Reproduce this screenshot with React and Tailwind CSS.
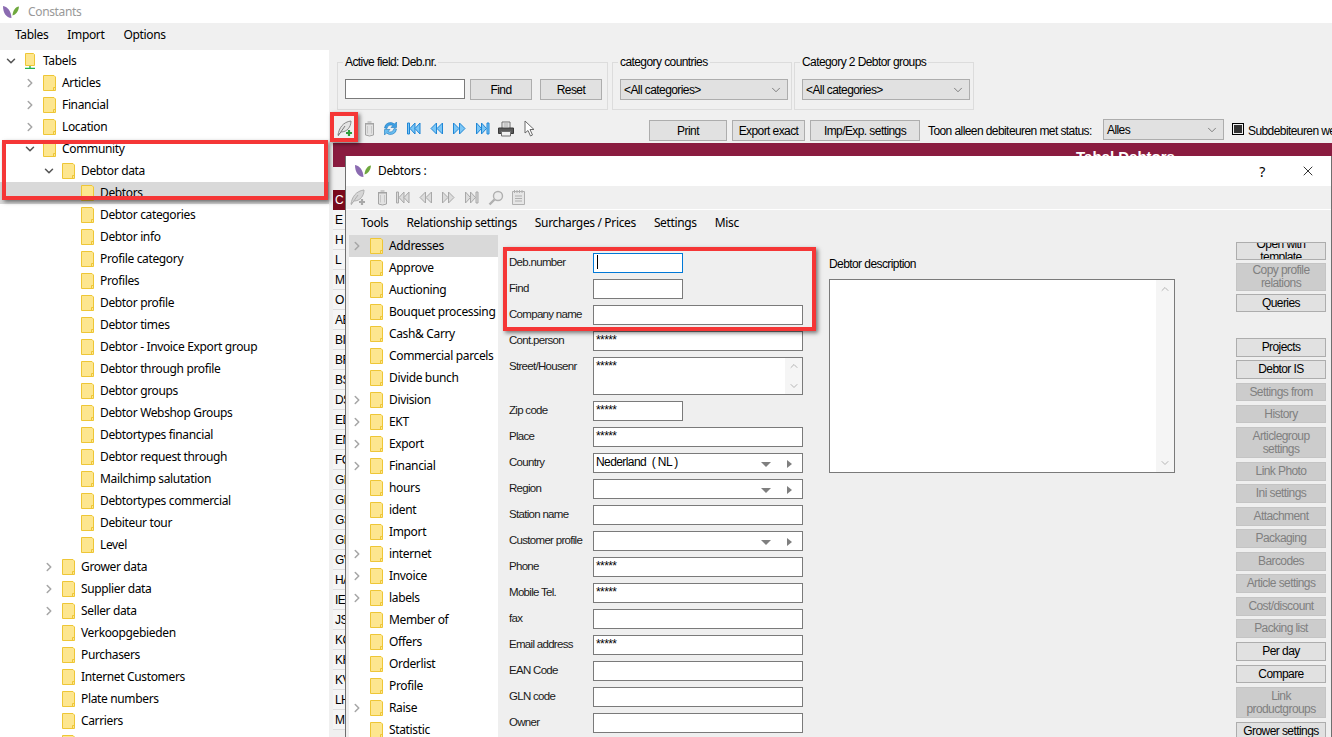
import { ChevronDown, ChevronRight, ChevronUp, X } from "lucide-react";

const treeRows = [
  { t: "Tabels", l: 0, c: "open", root: true },
  { t: "Articles", l: 1, c: "closed" },
  { t: "Financial", l: 1, c: "closed" },
  { t: "Location", l: 1, c: "closed" },
  { t: "Community", l: 1, c: "open" },
  { t: "Debtor data", l: 2, c: "open" },
  { t: "Debtors", l: 3, sel: true },
  { t: "Debtor categories", l: 3 },
  { t: "Debtor info", l: 3 },
  { t: "Profile category", l: 3 },
  { t: "Profiles", l: 3 },
  { t: "Debtor profile", l: 3 },
  { t: "Debtor times", l: 3 },
  { t: "Debtor - Invoice Export group", l: 3 },
  { t: "Debtor through profile", l: 3 },
  { t: "Debtor groups", l: 3 },
  { t: "Debtor Webshop Groups", l: 3 },
  { t: "Debtortypes financial", l: 3 },
  { t: "Debtor request through", l: 3 },
  { t: "Mailchimp salutation", l: 3 },
  { t: "Debtortypes commercial", l: 3 },
  { t: "Debiteur tour", l: 3 },
  { t: "Level", l: 3 },
  { t: "Grower data", l: 2, c: "closed" },
  { t: "Supplier data", l: 2, c: "closed" },
  { t: "Seller data", l: 2, c: "closed" },
  { t: "Verkoopgebieden", l: 2 },
  { t: "Purchasers", l: 2 },
  { t: "Internet Customers", l: 2 },
  { t: "Plate numbers", l: 2 },
  { t: "Carriers", l: 2 },
  { t: "", l: 2 },
];

const dialogTree = [
  ["Addresses", true],
  ["Approve"],
  ["Auctioning"],
  ["Bouquet processing"],
  ["Cash& Carry"],
  ["Commercial parcels"],
  ["Divide bunch"],
  ["Division", true],
  ["EKT", true],
  ["Export", true],
  ["Financial", true],
  ["hours"],
  ["ident"],
  ["Import"],
  ["internet", true],
  ["Invoice", true],
  ["labels", true],
  ["Member of"],
  ["Offers"],
  ["Orderlist"],
  ["Profile"],
  ["Raise", true],
  ["Statistic"],
];

const gridRows = ["E", "H", "L", "M", "O", "AE", "BI", "BR", "BS", "DS", "ED", "EN", "FC", "GE", "GF", "GS", "GL", "GV", "HA", "IE", "JS", "KC", "KH", "KV", "LH", "M"];

const formRows = [
  { label: "Deb.number", w: "w-[90px]", focus: true },
  { label: "Find", w: "w-[90px]" },
  { label: "Company name" },
  { label: "Cont.person", value: "*****" },
  { label: "Street/Housenr", value: "*****", tall: true },
  { label: "Zip code", value: "*****", w: "w-[90px]" },
  { label: "Place", value: "*****" },
  { label: "Country", value: "Nederland  ( NL )", select: true },
  { label: "Region", select: true },
  { label: "Station name" },
  { label: "Customer profile", select: true },
  { label: "Phone", value: "*****" },
  { label: "Mobile Tel.", value: "*****" },
  { label: "fax" },
  { label: "Email address", value: "*****" },
  { label: "EAN Code" },
  { label: "GLN code" },
  { label: "Owner" },
];

const sideButtons = [
  { t: "Open with template", c: "h-[18px]" },
  { t: "Copy profile relations", c: "h-[28px] mt-[3px]", off: true },
  { t: "Queries", c: "h-[18px] mt-[3px]" },
  { t: "Projects", c: "h-[19px] mt-[26px]" },
  { t: "Debtor IS", c: "h-[19px] mt-[3px]" },
  { t: "Settings from", c: "h-[18px] mt-[4px]", off: true },
  { t: "History", c: "h-[18px] mt-[4px]", off: true },
  { t: "Articlegroup settings", c: "h-[31px] mt-[4px]", off: true },
  { t: "Link Photo", c: "h-[19px] mt-[4px]", off: true },
  { t: "Ini settings", c: "h-[19px] mt-[3px]", off: true },
  { t: "Attachment", c: "h-[19px] mt-[4px]", off: true },
  { t: "Packaging", c: "h-[19px] mt-[3px]", off: true },
  { t: "Barcodes", c: "h-[19px] mt-[4px]", off: true },
  { t: "Article settings", c: "h-[19px] mt-[3px]", off: true },
  { t: "Cost/discount", c: "h-[19px] mt-[4px]", off: true },
  { t: "Packing list", c: "h-[19px] mt-[3px]", off: true },
  { t: "Per day", c: "h-[19px] mt-[4px]" },
  { t: "Compare", c: "h-[18px] mt-[4px]" },
  { t: "Link productgroups", c: "h-[31px] mt-[4px]", off: true },
  { t: "Grower settings", c: "h-[19px] mt-[4px]" },
];

const Logo = () => (
  <svg width="18" height="14" viewBox="0 0 18 14" className="shrink-0">
    <path d="M1 1 C6 2 9 6 9.5 13 C4 12.5 1 8 1 1 Z" fill="#8b6bb1" />
    <path d="M17 1.5 C13.5 2 11 5 10.5 10.5 C14 9.5 16.5 6.5 17 1.5 Z" fill="#6fa83e" />
  </svg>
);

const Folder = () => (
  <svg width="13" height="16" viewBox="0 0 13 16" className="shrink-0">
    <path d="M0.5 0.5 H11 L12.5 2 V15.5 H0.5 Z" fill="#fde68f" stroke="#eec636" />
    <path d="M10.5 15.5 V12.5 H12.5" fill="none" stroke="#eec636" />
  </svg>
);

// network style folder used for the tree root
const RootFolder = () => (
  <svg width="10" height="16" viewBox="0 0 10 16" className="shrink-0">
    <path d="M0.5 0.5 H8.5 L9.5 1.5 V12.5 H0.5 Z" fill="#fde68f" stroke="#eec636" />
    <path d="M5 13 V15.5 M0 15.5 H10" stroke="#22b14c" strokeWidth="1.4" />
  </svg>
);

const Chevron = ({ state }) => {
  if (state === "open") return <ChevronDown size={14} strokeWidth={2.6} className="text-[#555555] shrink-0" />;
  if (state === "closed") return <ChevronRight size={14} strokeWidth={2.6} className="text-[#a6a6a6] shrink-0" />;
  return <span className="w-[14px] shrink-0" />;
};

const Feather = ({ on }) => (
  <svg width="16" height="17" viewBox="0 0 16 17" className="shrink-0">
    <path d="M1 15 C2 8 6 2 14 1 C14 7 10 12 4 12 Z" fill={on ? "#e4e4e4" : "#d6d6d6"} stroke={on ? "#8a8a8a" : "#b0b0b0"} />
    <path d="M1 16 L8 6" stroke={on ? "#7a7a7a" : "#b0b0b0"} />
    <path d="M12 10 V16 M9 13 H15" stroke={on ? "#2e9e3c" : "#a8a8a8"} strokeWidth="2.2" />
  </svg>
);

const Trash = () => (
  <svg width="11" height="16" viewBox="0 0 11 16" className="shrink-0">
    <path d="M1.5 3 H9.5 V14 Q5.5 16 1.5 14 Z" fill="#e2e2e2" stroke="#a4a4a4" />
    <path d="M1 2.5 H10 M3.5 1 H7.5" stroke="#a4a4a4" />
    <path d="M3.5 5 V12.5 M7.5 5 V12.5" stroke="#c8c8c8" />
  </svg>
);

const Refresh = () => (
  <svg width="15" height="15" viewBox="0 0 15 15" className="shrink-0">
    <path d="M1.5 7 A6 6 0 0 1 11.5 3 L13.5 1 V6.5 H8 L10 4.5 A4 4 0 0 0 4 7.5 Z" fill="#3ea0e4" stroke="#1d78bd" strokeWidth="0.6" />
    <path d="M13.5 8 A6 6 0 0 1 3.5 12 L1.5 14 V8.5 H7 L5 10.5 A4 4 0 0 0 11 7.5 Z" fill="#69bdf0" stroke="#1d78bd" strokeWidth="0.6" />
  </svg>
);

const Media = ({ kind, on }) => {
  const fill = on ? "#7cc6f5" : "#dcdcdc";
  const line = on ? "#1e86d6" : "#a8a8a8";
  const paths = {
    first: ["M0.5 1 H2.5 V12 H0.5 Z", "M8 1 V12 L3 6.5 Z", "M13 1 V12 L8 6.5 Z"],
    prev: ["M6.5 1 V12 L1 6.5 Z", "M12.5 1 V12 L7 6.5 Z"],
    next: ["M0.5 1 V12 L6 6.5 Z", "M6.5 1 V12 L12 6.5 Z"],
    last: ["M0.5 1 V12 L5.5 6.5 Z", "M5.5 1 V12 L10.5 6.5 Z", "M11 1 H13 V12 H11 Z"],
  };
  return (
    <svg width="14" height="13" viewBox="0 0 14 13" className="shrink-0">
      {paths[kind].map((d) => (
        <path key={d} d={d} fill={fill} stroke={line} strokeWidth="1" />
      ))}
    </svg>
  );
};

const Printer = () => (
  <svg width="16" height="16" viewBox="0 0 16 16" className="shrink-0">
    <path d="M4 7 V1 H12 V7" fill="#f6f6f6" stroke="#6e6e6e" />
    <path d="M0.5 7 H15.5 V12.5 H0.5 Z" fill="#595959" stroke="#3a3a3a" />
    <path d="M3.5 10.5 H12.5 V15 H3.5 Z" fill="#f0f0f0" stroke="#6e6e6e" />
    <path d="M5.5 3 H10.5 M5.5 5 H10.5" stroke="#9a9a9a" />
  </svg>
);

const Cursor = () => (
  <svg width="11" height="17" viewBox="0 0 11 17" className="shrink-0">
    <path d="M1 1 V13 L4 10.5 L6.5 16 L8.5 15 L6 9.5 H10 Z" fill="#ffffff" stroke="#6b6b6b" />
  </svg>
);

const Magnifier = () => (
  <svg width="16" height="16" viewBox="0 0 16 16" className="shrink-0">
    <circle cx="10" cy="6" r="4.5" fill="#ececec" stroke="#b0b0b0" strokeWidth="1.4" />
    <path d="M6.5 9.5 L1.5 14.5" stroke="#b0b0b0" strokeWidth="2.4" />
  </svg>
);

const Notepad = () => (
  <svg width="13" height="15" viewBox="0 0 13 15" className="shrink-0">
    <path d="M0.5 1.5 H12.5 V14.5 H0.5 Z" fill="#e6e6e6" stroke="#b0b0b0" />
    <path d="M2.5 0 V3 M5 0 V3 M7.5 0 V3 M10 0 V3 M3 6 H10 M3 8.5 H10 M3 11 H10" stroke="#b0b0b0" />
  </svg>
);

const WinButton = ({ children, className }) => (
  <button className={`shrink-0 bg-[#e1e1e1] border border-[#adadad] text-black flex items-center justify-center ${className}`}>
    {children}
  </button>
);

const WinSelect = ({ children, className }) => (
  <div className={`shrink-0 bg-[#e1e1e1] border border-[#adadad] flex items-center justify-between pl-[3px] pr-[4px] ${className}`}>
    <span>{children}</span>
    <ChevronDown size={14} strokeWidth={1.2} className="text-[#555555]" />
  </div>
);

const Group = ({ title, className, children }) => (
  <fieldset className={`shrink-0 border border-[#dcdcdc] h-[55px] pt-[10px] pl-[7px] pr-[3px] ${className}`}>
    <legend className="-ml-[2px] px-[2px] leading-[14px]">{title}</legend>
    <div className="flex">{children}</div>
  </fieldset>
);

const FormRow = ({ row }) => (
  <div className="flex">
    <div className="w-[84px] h-[20px] flex items-center whitespace-nowrap text-[11.5px] tracking-[-0.7px] text-[#1a1a1a]">{row.label}</div>
    <div
      className={`relative bg-white border ${row.focus ? "border-[#0078d7]" : "border-[#7a7a7a]"} ${row.tall ? "h-[38px]" : "h-[20px]"} ${row.w || "w-[210px]"} px-[2px] pt-[1px] leading-[15px] whitespace-pre text-black`}
    >
      {row.value}
      {row.focus && <span className="block w-px h-[14px] ml-px bg-black" />}
      {row.tall && (
        <span className="absolute right-0 top-0 bottom-0 w-[17px] bg-[#f5f5f5] flex flex-col items-center justify-between py-[2px] text-[#b5b5b5]">
          <ChevronUp size={12} />
          <ChevronDown size={12} />
        </span>
      )}
      {row.select && (
        <span className="absolute right-[10px] top-[6px] flex items-center gap-[16px]">
          <span className="w-0 h-0 border-x-[5px] border-x-transparent border-t-[5px] border-t-[#7f7f7f]" />
          <span className="w-0 h-0 border-y-[4px] border-y-transparent border-l-[5px] border-l-[#7f7f7f]" />
        </span>
      )}
    </div>
  </div>
);

const RedBox = ({ className }) => (
  <div className={`absolute border-[4px] border-[#f53636] shadow-[2px_2px_4px_rgba(0,0,0,0.5)] ${className}`} />
);

const App = () => {
  const ui = "font-['Noto_Sans',sans-serif] text-[12px] tracking-[-0.35px]";
  return (
    <div className="relative w-[1332px] h-[737px] overflow-hidden bg-[#f0f0f0] flex flex-col font-['Liberation_Sans',Arial,sans-serif] text-[12px] tracking-[-0.58px] text-black">
      <div className={`h-[23px] bg-white flex items-center pl-[2px] gap-[8px] text-[#999999] ${ui}`}>
        <Logo />
        <span>Constants</span>
      </div>
      <div className={`h-[27px] pb-[4px] flex items-center pl-[15px] gap-[19px] ${ui}`}>
        <span>Tables</span>
        <span>Import</span>
        <span>Options</span>
      </div>

      <div className="flex flex-1 min-h-0">
        <aside className={`w-[329px] shrink-0 bg-white overflow-hidden ${ui}`}>
          {treeRows.map((r) => (
            <div
              key={r.t + r.l}
              className={`h-[22px] flex items-center ${r.sel ? "bg-[#d9d9d9]" : ""} ${
                r.l === 0 ? "pl-[4px]" : r.l === 1 ? "pl-[23px]" : r.l === 2 ? "pl-[42px]" : "pl-[60px]"
              }`}
            >
              <Chevron state={r.c} />
              {r.root ? (
                <span className="ml-[7px] flex"><RootFolder /></span>
              ) : (
                <span className={`${r.l === 3 ? "ml-[7px]" : "ml-[6px]"} flex`}><Folder /></span>
              )}
              <span className={`${r.root ? "ml-[8px]" : "ml-[6px]"} whitespace-nowrap`}>{r.t}</span>
            </div>
          ))}
        </aside>

        <main className="flex-1 min-w-0 overflow-hidden flex flex-col">
          <div className="h-[62px] pl-[8px] pt-[5px] flex">
            <Group title="Active field: Deb.nr." className="w-[271px]">
              <div className="w-[120px] h-[20px] bg-white border border-[#7a7a7a]" />
              <WinButton className="w-[62px] h-[21px] ml-[5px]">Find</WinButton>
              <WinButton className="w-[62px] h-[21px] ml-[8px]">Reset</WinButton>
            </Group>
            <Group title="category countries" className="w-[180px] ml-[4px]">
              <WinSelect className="w-[168px] h-[21px]">{"<All categories>"}</WinSelect>
            </Group>
            <Group title="Category 2 Debtor groups" className="w-[180px] ml-[2px]">
              <WinSelect className="w-[168px] h-[21px]">{"<All categories>"}</WinSelect>
            </Group>
          </div>

          <div className="h-[31px] flex items-start whitespace-nowrap">
            <div className="flex items-center shrink-0 mt-[8px] ml-[8px]">
              <Feather on />
              <span className="ml-[11px]"><Trash /></span>
              <span className="ml-[8px]"><Refresh /></span>
              <span className="ml-[9px]"><Media kind="first" on /></span>
              <span className="ml-[9px]"><Media kind="prev" on /></span>
              <span className="ml-[9px]"><Media kind="next" on /></span>
              <span className="ml-[9px]"><Media kind="last" on /></span>
              <span className="ml-[8px]"><Printer /></span>
              <span className="ml-[10px]"><Cursor /></span>
            </div>
            <WinButton className="w-[78px] h-[21px] mt-[8px] ml-[114px]">Print</WinButton>
            <WinButton className="w-[73px] h-[21px] mt-[8px] ml-[5px]">Export exact</WinButton>
            <WinButton className="w-[110px] h-[21px] mt-[8px] ml-[5px]">Imp/Exp. settings</WinButton>
            <span className="w-[175px] shrink-0 ml-[8px] mt-[10px]">Toon alleen debiteuren met status:</span>
            <WinSelect className="w-[121px] h-[21px] mt-[7px]">Alles</WinSelect>
            <span className="mt-[11px] ml-[8px] w-[12px] h-[12px] border border-black flex items-center justify-center shrink-0">
              <span className="w-[8px] h-[8px] bg-[#333333]" />
            </span>
            <span className="mt-[10px] ml-[4px] shrink-0">Subdebiteuren weergeven</span>
          </div>

          <div className="ml-[4px] h-[24px] bg-[#8a1c40] text-white font-bold text-[15px] tracking-normal pt-[3px] pl-[743px] whitespace-nowrap">
            Tabel Debtors
          </div>
          <div className="ml-[4px] mt-[23px] flex flex-col">
            <div className="h-[20px] w-[13px] bg-[#7a0a1c] text-white flex items-center pl-[2px]">C</div>
            {gridRows.map((g, i) => (
              <div key={g + i} className="h-[20px] w-[13px] overflow-hidden bg-[#f5f5f5] border-b border-[#dddddd] flex items-center pl-[2px] pt-[1px] whitespace-nowrap">
                {g}
              </div>
            ))}
          </div>
        </main>
      </div>

      {/* dialog window */}
      <section className="absolute left-[345px] top-[156px] w-[987px] h-[581px] flex flex-col bg-[#efefef] border-l border-r border-[#6f6f6f]">
        <div className={`h-[30px] bg-white flex items-center pl-[8px] ${ui}`}>
          <Logo />
          <span className="ml-[6px]">Debtors :</span>
          <span className="ml-auto text-[14px] mr-[35px]">?</span>
          <X size={16} strokeWidth={1.2} className="mr-[15px]" />
        </div>
        <div className="h-[24px] bg-[#f0f0f0] border-b border-white flex items-center pl-[4px]">
          <Feather />
          <span className="ml-[11px]"><Trash /></span>
          <span className="ml-[8px]"><Media kind="first" /></span>
          <span className="ml-[9px]"><Media kind="prev" /></span>
          <span className="ml-[9px]"><Media kind="next" /></span>
          <span className="ml-[9px]"><Media kind="last" /></span>
          <span className="ml-[9px]"><Magnifier /></span>
          <span className="ml-[8px]"><Notepad /></span>
        </div>
        <div className={`h-[26px] flex items-center pl-[15px] gap-[18px] ${ui}`}>
          <span>Tools</span>
          <span>Relationship settings</span>
          <span>Surcharges / Prices</span>
          <span>Settings</span>
          <span>Misc</span>
        </div>

        <div className="flex flex-1 min-h-0">
          <div className={`ml-[3px] w-[149px] shrink-0 -mt-px bg-white overflow-hidden ${ui}`}>
            {dialogTree.map(([t, more], i) => (
              <div key={t} className={`h-[22px] flex items-center pl-[1px] ${i === 0 ? "bg-[#d9d9d9]" : ""}`}>
                <Chevron state={more ? "closed" : undefined} />
                <span className="ml-[6px] flex"><Folder /></span>
                <span className="ml-[6px] whitespace-nowrap">{t}</span>
              </div>
            ))}
          </div>

          <div className="w-[305px] shrink-0 pl-[11px] pt-[17px] flex flex-col gap-[6px]">
            {formRows.map((row) => (
              <FormRow key={row.label} row={row} />
            ))}
          </div>

          <div className="w-[346px] shrink-0 ml-[26px] pt-[19px]">
            <div className="h-[24px]">Debtor description</div>
            <div className="relative h-[194px] bg-white border border-[#7a7a7a]">
              <div className="absolute right-0 top-0 bottom-0 w-[18px] bg-[#f5f5f5] flex flex-col items-center justify-between py-[3px] text-[#b5b5b5]">
                <ChevronUp size={12} />
                <ChevronDown size={12} />
              </div>
            </div>
          </div>

          <div className="w-[90px] ml-[61px] pt-[6px] flex flex-col shrink-0 leading-[13px] text-center">
            {sideButtons.map((b) => (
              <div
                key={b.t}
                className={`shrink-0 overflow-hidden flex items-center justify-center border ${b.c} ${
                  b.off ? "bg-[#cccccc] border-[#c4c4c4] text-[#808080]" : "bg-[#e1e1e1] border-[#adadad] text-black"
                }`}
              >
                {b.t}
              </div>
            ))}
          </div>
        </div>
      </section>

      {/* red callouts drawn over the screenshot */}
      <RedBox className="left-[2px] top-[140px] w-[326px] h-[60px]" />
      <RedBox className="left-[330px] top-[112px] w-[28px] h-[30px]" />
      <RedBox className="left-[503px] top-[247px] w-[313px] h-[84px]" />
    </div>
  );
};

export default App;
